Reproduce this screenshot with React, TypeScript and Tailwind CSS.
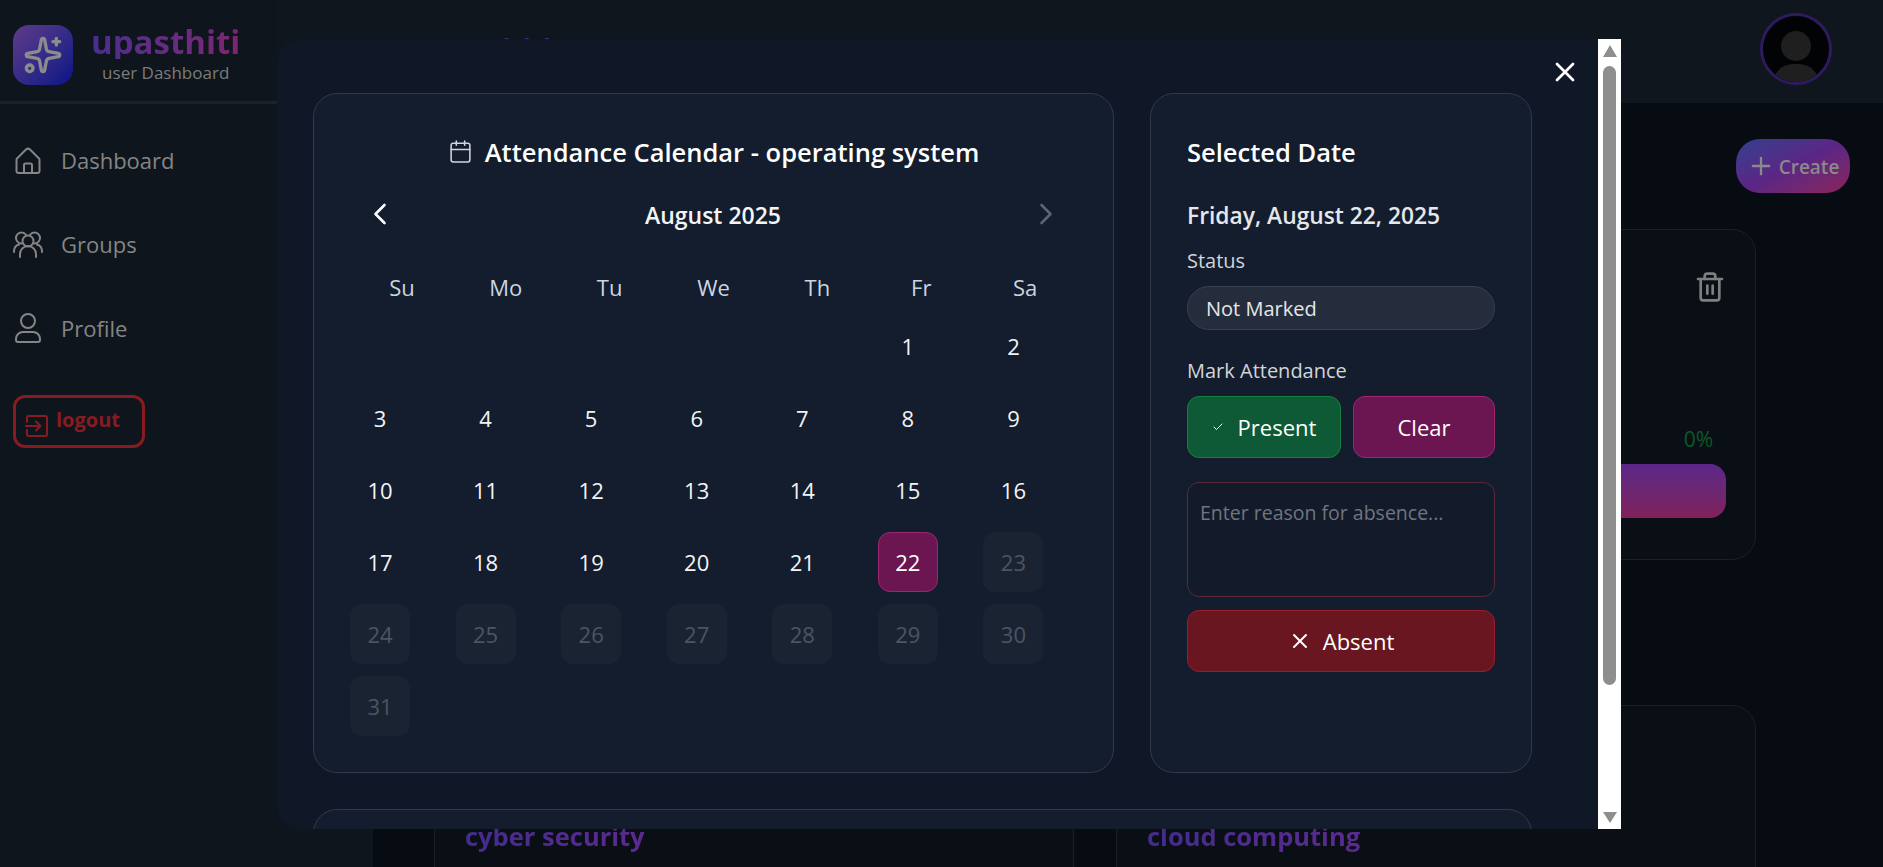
import { Calendar, Check, ChevronLeft, ChevronRight, Plus, Sparkles, Trash2, X } from 'lucide-react';

const HomeIcon = () => (
  <svg viewBox="0 0 26 27" className="h-[27px] w-[26px]" fill="none" stroke="currentColor" strokeWidth="2" strokeLinejoin="round">
    <path d="M2 11.5 11 2.5a3 3 0 0 1 4 0l9 9a2 2 0 0 1 .5 1.4V24a2 2 0 0 1-2 2H3.5a2 2 0 0 1-2-2V12.9a2 2 0 0 1 .5-1.4Z" />
    <path d="M9 26v-8a1.5 1.5 0 0 1 1.5-1.5h5A1.5 1.5 0 0 1 17 18v8" />
  </svg>
);

const ProfileIcon = () => (
  <svg viewBox="0 0 26 30" className="h-[30px] w-[26px]" fill="none" stroke="currentColor" strokeWidth="2">
    <circle cx="13" cy="8" r="7" />
    <path d="M8 19h10a7 7 0 0 1 7 7v1a2 2 0 0 1-2 2H3a2 2 0 0 1-2-2v-1a7 7 0 0 1 7-7Z" />
  </svg>
);

const GroupIcon = () => (
  <svg viewBox="0 0 30 27" className="-mx-[2px] h-[27px] w-[30px]" fill="none" stroke="currentColor" strokeWidth="2" strokeLinecap="round">
    <circle cx="8.500" cy="7" r="5.500" />
    <circle cx="21.500" cy="7" r="5.500" />
    <circle cx="15" cy="10" r="5.500" fill="#0e151c" />
    <path d="M7 26v-3a8 8 0 0 1 16 0v3" />
    <path d="M1 21v-1a7 7 0 0 1 5-6.500M29 21v-1a7 7 0 0 0-5-6.500" />
  </svg>
);

const LogoutIcon = () => (
  <svg viewBox="0 0 24 24" className="mt-[8px] h-[24px] w-[24px]" fill="none" stroke="currentColor" strokeWidth="2" strokeLinecap="round" strokeLinejoin="round">
    <path d="M2 8V3.500A1.500 1.500 0 0 1 3.500 2h17A1.500 1.500 0 0 1 22 3.500v17a1.500 1.500 0 0 1-1.500 1.500h-17A1.500 1.500 0 0 1 2 20.500V16" />
    <path d="M1 12h14M11 7.500l4.500 4.500-4.500 4.500" />
  </svg>
);

const navItems = [
  { label: 'Dashboard', icon: HomeIcon },
  { label: 'Groups', icon: GroupIcon },
  { label: 'Profile', icon: ProfileIcon },
];

const weekDays = ['Su', 'Mo', 'Tu', 'We', 'Th', 'Fr', 'Sa'];
const days = Array.from({ length: 31 }, (_, i) => i + 1);

const Sidebar = () => (
  <aside className="flex w-[373px] shrink-0 flex-col bg-[#0e151c]">
    <div className="flex h-[104px] items-center gap-[18px] border-b-[3px] border-[#1a222c] pt-[9px] pl-[13px]">
      <div className="flex h-[60px] w-[60px] items-center justify-center rounded-2xl bg-gradient-to-br from-[#5f3a8a] to-[#0a1285]">
        <Sparkles className="h-10 w-10 text-[#8c8c8c]" />
      </div>
      <div className="flex flex-col items-center pb-[2px]">
        <span className="bg-gradient-to-r from-[#4a2d90] to-[#7e2472] bg-clip-text text-[33px] leading-[34px] font-bold text-transparent">
          upasthiti
        </span>
        <span className="mt-1 text-[17px] leading-[20px] text-[#7c7c7c]">user Dashboard</span>
      </div>
    </div>
    <nav className="flex flex-col gap-[42px] pt-[35px] pl-[15px]">
      {navItems.map((item) => (
        <div key={item.label} className="flex h-[42px] items-center gap-5 text-[22px] text-[#858585]">
          <item.icon />
          {item.label}
        </div>
      ))}
    </nav>
    <button className="mt-[46px] ml-[13px] flex h-[53px] w-[132px] items-center gap-[7px] rounded-xl border-[3px] border-[#861c20] pl-[9px] text-xl font-bold text-[#861c20]">
      <LogoutIcon />
      <span className="-mt-[4px]">logout</span>
    </button>
  </aside>
);

const Background = () => (
  <div className="flex h-full">
    <Sidebar />
    <div className="flex flex-1 flex-col bg-[#070b12]">
      <header className="-ml-[96px] flex h-[103px] shrink-0 items-center justify-between bg-[#0f161d] pr-[51px] pb-[5px] pl-[225px]">
        <span className="text-[30px] font-bold tracking-[11px] text-[#5b2a9a]">iii</span>
        <div className="relative h-[72px] w-[72px] overflow-hidden rounded-full border-[3px] border-[#2e1b5e] bg-[#020305]">
          <div className="absolute top-[15px] left-[18px] h-[30px] w-[30px] rounded-full bg-[#1f1f1f]" />
          <div className="absolute top-[48px] left-[10px] h-[30px] w-[46px] rounded-t-[20px] bg-[#1f1f1f]" />
        </div>
      </header>
      <main className="flex flex-1 flex-col pr-[127px] pl-[61px]">
        <div className="mt-[36px] flex justify-end">
          <button className="-mr-[94px] flex h-[54px] w-[114px] items-center justify-center gap-1 rounded-[24px] bg-gradient-to-br from-[#2d3f8f] via-[#5b2585] to-[#8a2058] text-[19px] font-semibold text-[#8a8a8a]">
            <Plus className="h-7 w-7" />
            <span className="mt-[3px]">Create</span>
          </button>
        </div>
        <div className="mt-[36px] ml-auto flex h-[331px] w-[400px] shrink-0 flex-col rounded-3xl border border-[#1a1f29] bg-[#0a0f16] px-[29px]">
          <div className="mt-[41px] flex justify-end">
            <Trash2 className="h-8 w-8 text-[#7f7f7f]" />
          </div>
          <div className="mt-[121px] pr-[13px] text-right text-[21px] leading-[30px] text-[#0b5a26]">0%</div>
          <div className="mt-[10px] h-[54px] rounded-2xl bg-gradient-to-b from-[#5b2689] to-[#81205a]" />
        </div>
        <div className="mt-[145px] grid grid-cols-2 gap-[42px]">
          {['cyber security', 'cloud computing'].map((name) => (
            <div key={name} className="h-[200px] rounded-3xl border border-[#1a1f29] bg-[#0a0f16] px-[30px] pt-[114px]">
              <span className="bg-gradient-to-r from-[#432c8c] to-[#5b2a90] bg-clip-text text-[25.500px] leading-[32px] font-bold text-transparent">
                {name}
              </span>
            </div>
          ))}
        </div>
      </main>
    </div>
  </div>
);

const CalendarCard = () => (
  <div className="flex h-[680px] flex-col rounded-3xl border border-[#2f3a4b] bg-[#131d2d] p-[36px]">
    <h2 className="flex h-[44px] items-center justify-center gap-3 text-[25.500px] font-semibold text-white">
      <Calendar className="h-[25px] w-[25px] text-[#d1d5db]" strokeWidth={1.5} />
      Attendance Calendar - operating system
    </h2>
    <div className="mt-[18px] flex h-[48px] items-center justify-between pr-[13px] pl-3">
      <ChevronLeft className="-mt-[3px] h-9 w-9 text-white" strokeWidth={1.75} />
      <span className="text-[23px] font-semibold text-[#f3f4f6]">August 2025</span>
      <ChevronRight className="-mt-[3px] h-9 w-9 text-[#5b6472]" strokeWidth={1.75} />
    </div>
    <div className="mt-[28px] grid h-[40px] grid-cols-7 items-center text-center text-[22px] text-[#cbd5e1]">
      {weekDays.map((day) => (
        <span key={day}>{day}</span>
      ))}
    </div>
    <div className="mt-[9px] grid grid-cols-7 gap-3">
      {days.map((day) => {
        const selected = day === 22;
        const disabled = day > 22;
        return (
          <div
            key={day}
            style={{ gridColumnStart: day === 1 ? 6 : undefined }}
            className={
              selected
                ? 'flex h-[60px] w-[60px] items-center justify-center rounded-xl border border-[#9d2672] bg-[#6b1650] text-[22px] text-white'
                : disabled
                  ? 'flex h-[60px] w-[60px] items-center justify-center rounded-xl bg-[#1a2332] text-[22px] text-[#4b5563]'
                  : 'flex h-[60px] w-[60px] items-center justify-center text-[22px] text-[#f3f4f6]'
            }
          >
            {day}
          </div>
        );
      })}
    </div>
  </div>
);

const SelectedCard = () => (
  <div className="flex h-[680px] flex-col rounded-3xl border border-[#2f3a4b] bg-[#131d2d] p-[36px]">
    <h3 className="flex h-[44px] items-center text-[25.500px] font-semibold text-white">Selected Date</h3>
    <p className="mt-[28px] text-[22.800px] leading-[28px] font-semibold text-[#e5e7eb]">Friday, August 22, 2025</p>
    <p className="mt-[18px] text-[20px] leading-[26px] text-[#d1d5db]">Status</p>
    <div className="mt-[12px] flex h-[44px] items-center rounded-full border border-[#374151] bg-[#252d3d] pt-px pl-[18px] text-[20px] text-[#e5e7eb]">
      Not Marked
    </div>
    <p className="mt-[28px] text-[20px] leading-[26px] text-[#d1d5db]">Mark Attendance</p>
    <div className="mt-[12px] grid h-[62px] grid-cols-[154px_142px] gap-3">
      <button className="flex items-center justify-center gap-[14px] rounded-xl border border-[#15803d] bg-[#0f5a36] text-[22px] text-white">
        <Check className="h-3 w-3" />
        Present
      </button>
      <button className="rounded-xl border border-[#9d2672] bg-[#6b1650] text-[22px] text-white">Clear</button>
    </div>
    <textarea
      readOnly
      placeholder="Enter reason for absence..."
      className="mt-[24px] h-[115px] w-full resize-none rounded-xl border border-[#5a2a3a] bg-[#131a2a] px-3 pt-[15px] text-[19.500px] placeholder:text-[#6f7680]"
    />
    <button className="mt-[13px] flex h-[62px] shrink-0 items-center justify-center gap-[11px] rounded-xl border border-[#9b1c2c] bg-[#6a1621] text-[22px] text-white">
      <X className="h-6 w-6" />
      Absent
    </button>
  </div>
);

const ScrollTrack = () => (
  <div className="flex w-[23px] shrink-0 flex-col items-center bg-white pt-[6px]">
    <div className="h-0 w-0 border-x-[7px] border-b-[12px] border-x-transparent border-b-[#8e8e8e]" />
    <div className="mt-[9px] h-[619px] w-[13px] rounded-full bg-[#8e8e8e]" />
    <div className="mt-[127px] h-0 w-0 border-x-[7px] border-t-[11px] border-x-transparent border-t-[#8e8e8e]" />
  </div>
);

export default function App() {
  return (
    <div className="relative h-[867px] w-full overflow-hidden font-['Open_Sans',sans-serif]">
      <Background />
      <div className="absolute top-[39px] left-[277px] flex h-[790px] w-[1344px] overflow-hidden rounded-l-3xl bg-[#101828]">
        <div className="relative flex-1 overflow-hidden pt-[54px] pr-[66px] pl-[36px]">
          <button className="absolute top-[17px] right-[17px] text-white">
            <X className="h-8 w-8" strokeWidth={2} />
          </button>
          <div className="grid grid-cols-[801px_382px] gap-[36px]">
            <CalendarCard />
            <SelectedCard />
          </div>
          <div className="mt-[36px] h-[300px] rounded-3xl border border-[#2f3a4b] bg-[#131d2d]" />
        </div>
        <ScrollTrack />
      </div>
    </div>
  );
}
